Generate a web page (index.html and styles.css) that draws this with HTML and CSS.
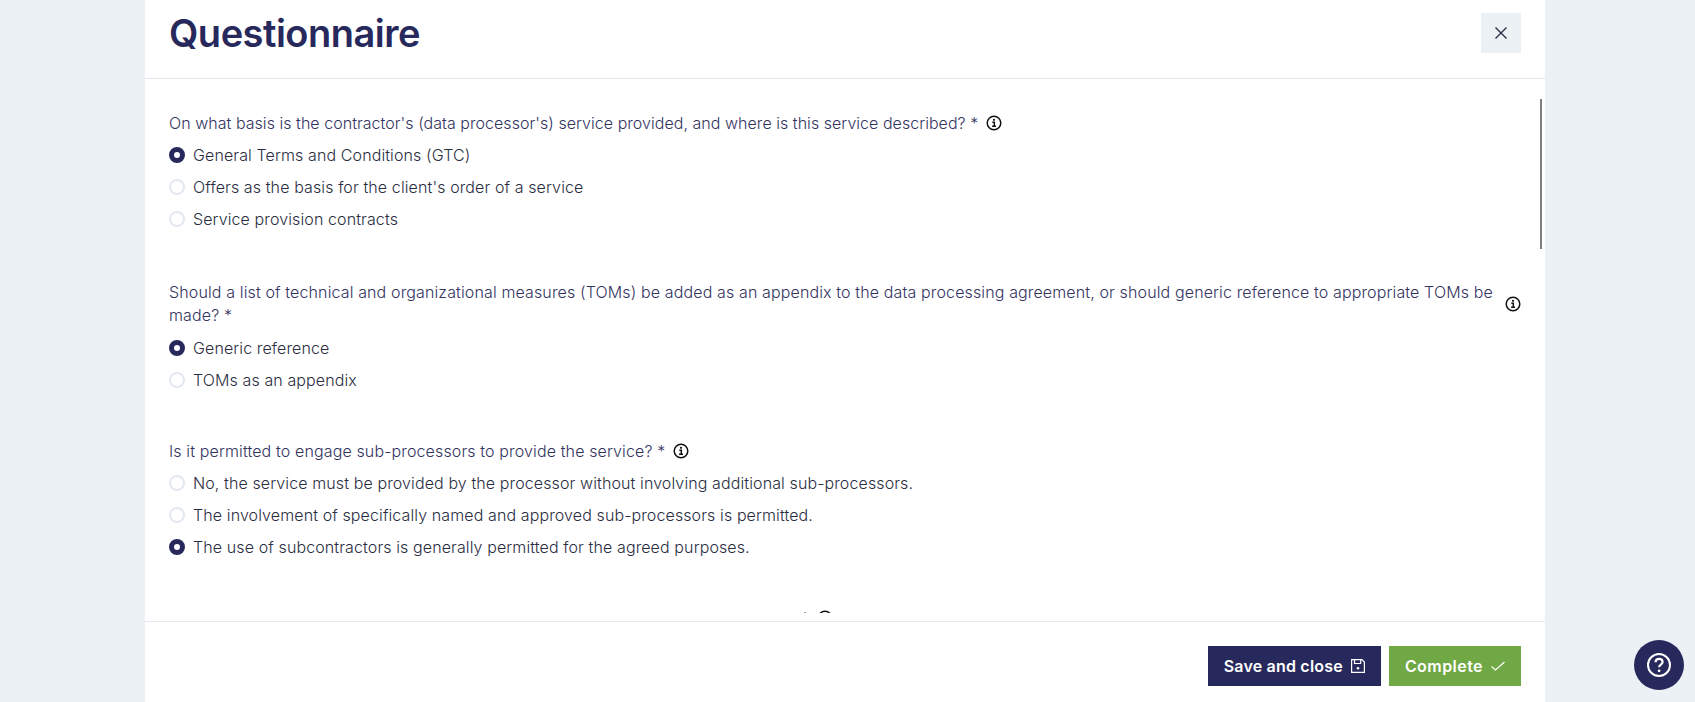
FILE: index.html
```html
<!DOCTYPE html>
<html lang="en">
<head>
<meta charset="utf-8">
<title>Questionnaire</title>
<link rel="stylesheet" href="styles.css">
</head>
<body>
<div class="modal">
  <header class="modal-head">
    <h1>Questionnaire</h1>
    <button class="close" aria-label="Close"><svg width="14" height="14" viewBox="0 0 14 14"><path d="M1.500 1.500l11 11M12.500 1.500l-11 11" fill="none" stroke="#2a2f45" stroke-width="1.400"/></svg></button>
  </header>
  <main class="modal-body">
    <div class="scrollbar"></div>
    <div class="scroller">
      <section class="q">
        <div class="q-label tight"><span>On what basis is the contractor's (data processor's) service provided, and where is this service described? *</span><svg class="info" viewBox="0 0 16 16"><circle cx="8" cy="8" r="6.800" fill="none" stroke="#111" stroke-width="1.500"/><path d="M6.300 7.200h2v3.900M6.100 11.200h3.900" fill="none" stroke="#111" stroke-width="1.500"/><circle cx="8" cy="4.800" r="1.100" fill="#111"/></svg></div>
        <div class="opt"><i class="radio on"></i>General Terms and Conditions (GTC)</div>
        <div class="opt"><i class="radio"></i>Offers as the basis for the client's order of a service</div>
        <div class="opt"><i class="radio"></i>Service provision contracts</div>
      </section>
      <section class="q two">
        <div class="q-label"><span>Should a list of technical and organizational measures (TOMs) be added as an appendix to the data processing agreement, or should generic reference to appropriate TOMs be made? *</span><svg class="info" viewBox="0 0 16 16"><circle cx="8" cy="8" r="6.800" fill="none" stroke="#111" stroke-width="1.500"/><path d="M6.300 7.200h2v3.900M6.100 11.200h3.900" fill="none" stroke="#111" stroke-width="1.500"/><circle cx="8" cy="4.800" r="1.100" fill="#111"/></svg></div>
        <div class="opt"><i class="radio on"></i>Generic reference</div>
        <div class="opt"><i class="radio"></i>TOMs as an appendix</div>
      </section>
      <section class="q three">
        <div class="q-label"><span>Is it permitted to engage sub-processors to provide the service? *</span><svg class="info" viewBox="0 0 16 16"><circle cx="8" cy="8" r="6.800" fill="none" stroke="#111" stroke-width="1.500"/><path d="M6.300 7.200h2v3.900M6.100 11.200h3.900" fill="none" stroke="#111" stroke-width="1.500"/><circle cx="8" cy="4.800" r="1.100" fill="#111"/></svg></div>
        <div class="opt"><i class="radio"></i>No, the service must be provided by the processor without involving additional sub-processors.</div>
        <div class="opt"><i class="radio"></i>The involvement of specifically named and approved sub-processors is permitted.</div>
        <div class="opt"><i class="radio on"></i>The use of subcontractors is generally permitted for the agreed purposes.</div>
      </section>
      <section class="q">
        <div class="q-label clipped"><span>*</span><svg class="info" viewBox="0 0 16 16"><circle cx="8" cy="8" r="6.800" fill="none" stroke="#111" stroke-width="1.500"/></svg></div>
      </section>
    </div>
  </main>
  <footer class="modal-foot">
    <button class="btn navy">Save and close<svg width="14" height="14" viewBox="0 0 14 14"><path d="M.6.600h10.300l2.500 2.500v10.300H.6z M3.500.600v3.900h6.200V.600" fill="none" stroke="#fff" stroke-width="1.200"/><circle cx="7" cy="9.200" r="1.300" fill="#fff"/></svg></button>
    <button class="btn green">Complete<svg width="14" height="14" viewBox="0 0 14 14"><path d="M.5 7.500l4 3.500L13.500 3" fill="none" stroke="#fff" stroke-width="1.200"/></svg></button>
  </footer>
</div>
<button class="help" aria-label="Help"><svg width="26" height="26" viewBox="0 0 26 26"><circle cx="13" cy="13" r="11" fill="none" stroke="#fff" stroke-width="2"/><path d="M9.500 10.300c0-2.200 1.600-3.500 3.600-3.500s3.500 1.300 3.500 3.200c0 2.700-3.500 2.700-3.500 5.200" fill="none" stroke="#fff" stroke-width="2.200"/><circle cx="13.100" cy="18.800" r="1.400" fill="#fff"/></svg></button>
</body>
</html>
```

FILE: styles.css
```css
* { box-sizing: border-box; }
html, body { margin: 0; height: 100%; }
body { background: #ecf1f6; font-family: Inter, "Liberation Sans", sans-serif; overflow: hidden; height: 702px; }
.modal { width: 1400px; height: 702px; margin-left: 145px; background: #fff; display: flex; flex-direction: column; }
.modal-head { height: 79px; flex: none; border-bottom: 1px solid #e3e8f0; padding: 13px 24px 0; display: flex; justify-content: space-between; align-items: flex-start; }
h1 { margin: 0; font-size: 38px; line-height: 40px; font-weight: 600; color: #27295c; letter-spacing: -0.5px; }
.close { width: 40px; height: 40px; border: 0; background: #ecf1f6; display: flex; align-items: center; justify-content: center; padding: 0; }
.modal-body { flex: 1; min-height: 0; padding: 0 0 8px; position: relative; display: flex; }
.scroller { flex: 1; min-height: 0; overflow: hidden; padding: 33px 24px 0; }
.scrollbar { position: absolute; right: 3px; top: 20px; width: 2px; height: 150px; background: #808080; }
.q { margin-bottom: 46px; }
.q.two { margin-bottom: 44px; }
.q.three { margin-bottom: 44px; }
.q.two .q-label { line-height: 23px; }
.q-label { display: flex; align-items: center; gap: 8px; font-size: 16px; line-height: 22px; color: #33335f; font-weight: 300; letter-spacing: 0.13px; margin-bottom: 5px; }
.q-label.tight { letter-spacing: 0.04px; }
.q-label.clipped { padding-left: 632px; }
.opt { display: flex; align-items: center; gap: 8px; height: 32px; font-size: 16px; font-weight: 300; letter-spacing: 0.11px; color: #2a2d42; }
.radio { width: 16px; height: 16px; border-radius: 50%; border: 2px solid #e3e8f0; background: #fff; flex: none; }
.radio.on { border: 5px solid #27295c; }
.info { width: 16px; height: 16px; flex: none; }
.modal-foot { height: 81px; flex: none; border-top: 1px solid #e6e8f2; display: flex; justify-content: flex-end; gap: 8px; padding: 24px 24px 0; }
.btn { height: 40px; border: 0; color: #fff; font: 600 16px Inter, "Liberation Sans", sans-serif; display: flex; align-items: center; gap: 8px; padding: 0 16px; }
.navy { background: #27295c; letter-spacing: 0.2px; }
.green { background: #70a845; letter-spacing: 0.45px; }
.help { position: absolute; left: 1634px; top: 640px; width: 50px; height: 50px; border-radius: 50%; border: 0; background: #27295c; display: flex; align-items: center; justify-content: center; padding: 0; }
```
